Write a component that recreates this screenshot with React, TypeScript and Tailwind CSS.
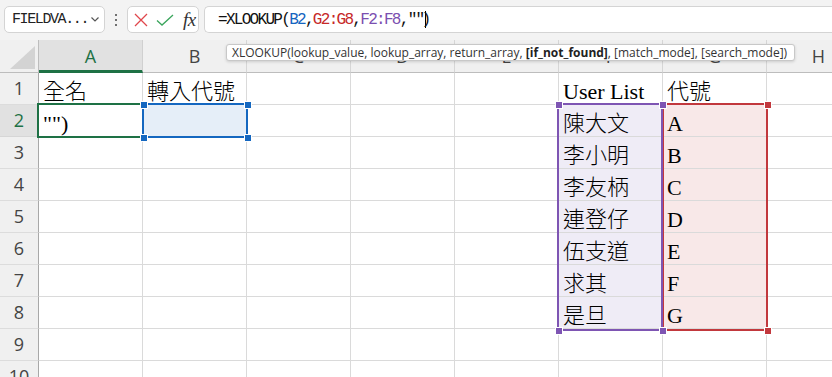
import React from "react";

const cols = ["A", "B", "C", "D", "E", "F", "G", "H"];
const rows = [1, 2, 3, 4, 5, 6, 7, 8, 9, 10];

const data: Record<string, string> = {
  A1: "全名",
  B1: "轉入代號",
  F1: "User List",
  G1: "代號",
  A2: '"")',
  F2: "陳大文",
  G2: "A",
  F3: "李小明",
  G3: "B",
  F4: "李友柄",
  G4: "C",
  F5: "連登仔",
  G5: "D",
  F6: "伍支道",
  G6: "E",
  F7: "求其",
  G7: "F",
  F8: "是旦",
  G8: "G",
};

function cellBg(c: string, r: number): string {
  if (c === "B" && r === 2) return "bg-[#e5eef8]";
  if (c === "F" && r >= 2 && r <= 8) return "bg-[#efecf6]";
  if (c === "G" && r >= 2 && r <= 8) return "bg-[#f8e8e8]";
  return "bg-white";
}

function Handle({ x, y, color }: { x: number; y: number; color: string }) {
  return (
    <div
      className="absolute w-[6px] h-[6px] border border-white box-content"
      style={{ left: x - 3.5, top: y - 3.5, backgroundColor: color }}
    />
  );
}

export default function App() {
  return (
    <div className="relative w-[832px] h-[377px] overflow-hidden bg-white font-['Open_Sans',sans-serif]">
      {/* toolbar */}
      <div className="h-[40px] bg-[#f3f3f3] flex items-start pt-[6px] pl-[4px]">
        <div className="w-[101px] h-[27px] bg-white border border-[#d4d4d4] rounded-[5px] flex items-center pl-[7px] pr-[4px]">
          <span className="font-['Liberation_Mono',monospace] text-[15px] tracking-[-1.4px] text-[#222] leading-none">
            FIELDVA...
          </span>
          <svg className="ml-auto" width="10" height="7" viewBox="0 0 10 7">
            <path d="M1.5 1.5 L5 5 L8.5 1.5" fill="none" stroke="#555" strokeWidth="1.2" />
          </svg>
        </div>
        <div className="w-[22px] h-[27px] flex flex-col items-center justify-center gap-[3px]">
          <span className="w-[2px] h-[2px] bg-[#444] rounded-full" />
          <span className="w-[2px] h-[2px] bg-[#444] rounded-full" />
          <span className="w-[2px] h-[2px] bg-[#444] rounded-full" />
        </div>
        <div className="w-[72px] h-[27px] bg-white border border-[#d4d4d4] rounded-[5px] flex items-center pl-[4px]">
          <svg width="16" height="16" viewBox="0 0 16 16" className="ml-[1px]">
            <path d="M2 2 L14 14 M14 2 L2 14" stroke="#e0474c" strokeWidth="1.3" fill="none" />
          </svg>
          <svg width="18" height="16" viewBox="0 0 18 16" className="ml-[7px]">
            <path d="M1 8.5 L6 13 L17 3" stroke="#3aa55c" strokeWidth="1.3" fill="none" />
          </svg>
          <span className="ml-[9px] font-['Liberation_Serif',serif] italic text-[19px] leading-none text-[#333] tracking-[-0.5px]">
            fx
          </span>
        </div>
        <div className="flex-1 ml-[5px] h-[27px] bg-white border border-r-0 border-[#d4d4d4] rounded-l-[5px] flex items-center pl-[13px]">
          <span className="font-['Liberation_Mono',monospace] text-[16px] tracking-[-1.7px] text-[#111] leading-none whitespace-pre flex items-center">
            <span>=XLOOKUP(</span>
            <span className="text-[#1565c0]">B2</span>
            <span>,</span>
            <span className="text-[#c62828]">G2:G8</span>
            <span>,</span>
            <span className="text-[#7b4fb0]">F2:F8</span>
            <span>,""</span>
            <span className="inline-block w-[1px] h-[17px] bg-black ml-[1px]" />
            <span className="-ml-[4px]">)</span>
          </span>
        </div>
      </div>

      {/* grid */}
      <div className="grid grid-cols-[39px_repeat(8,104px)] grid-rows-[33px_repeat(10,32px)]">
        <div className="bg-[#f0f0f0] border-r border-b border-[#bdbdbd] relative">
          <svg className="absolute left-[10px] top-[6px]" width="26" height="24" viewBox="0 0 26 24">
            <path d="M25 0 L25 23 L0 23 Z" fill="#d3d3d3" />
          </svg>
        </div>
        {cols.map((c) =>
          c === "A" ? (
            <div
              key={c}
              className="bg-[#e1e1e1] border-r border-[#d0d0d0] border-b-[3px] border-b-[#1e7145] flex items-center justify-center text-[18px] text-[#1e7145] pt-[2px]"
            >
              {c}
            </div>
          ) : (
            <div
              key={c}
              className="bg-[#f0f0f0] border-r border-[#d6d6d6] border-b border-b-[#bdbdbd] flex items-center justify-center text-[18px] text-[#444]"
            >
              {c}
            </div>
          )
        )}
        {rows.map((r) => (
          <React.Fragment key={r}>
            <div
              className={
                r === 2
                  ? "bg-[#e1e1e1] border-r border-r-[#a8a8a8] border-b border-b-[#d6d6d6] flex items-center justify-center text-[18px] text-[#1e7145]"
                  : "bg-[#f0f0f0] border-r border-r-[#a8a8a8] border-b border-b-[#dcdcdc] flex items-center justify-center text-[18px] text-[#444]"
              }
            >
              {r}
            </div>
            {cols.map((c) => (
              <div
                key={c + r}
                className={`${cellBg(c, r)} border-r border-b border-[#dadada] flex items-end pl-[4px] overflow-visible whitespace-nowrap font-['Liberation_Serif','Noto_Sans_CJK_TC',serif] font-light text-[22px] leading-[25px] text-black`}
              >
                {data[c + r] ?? ""}
              </div>
            ))}
          </React.Fragment>
        ))}
      </div>

      {/* tooltip */}
      <div className="absolute left-[226px] top-[44px] h-[17px] w-[569px] bg-white border border-[#c8c8c8] rounded-[3px] shadow-[0_1px_3px_rgba(0,0,0,0.15)] flex items-center pl-[5px] text-[12px] leading-none text-[#333] whitespace-nowrap">
        XLOOKUP(lookup_value, lookup_array, return_array,&nbsp;<b className="font-bold text-[#222]">[if_not_found]</b>, [match_mode], [search_mode])
      </div>

      {/* active cell A2 */}
      <div className="absolute left-[37px] top-[103px] w-[107px] h-[35px] border-2 border-[#1e7145]" />
      {/* B2 reference */}
      <div className="absolute left-[142px] top-[103px] w-[106px] h-[35px] border-2 border-[#1467c0]" />
      <Handle x={143} y={104} color="#1467c0" />
      <Handle x={247} y={104} color="#1467c0" />
      <Handle x={143} y={137} color="#1467c0" />
      <Handle x={247} y={137} color="#1467c0" />
      {/* G2:G8 */}
      <div className="absolute left-[662px] top-[103px] w-[106px] h-[228px] border-2 border-[#c2383d]" />
      {/* F2:F8 */}
      <div className="absolute left-[557px] top-[103px] w-[106px] h-[228px] border-2 border-[#7e55b3]" />
      <Handle x={767} y={104} color="#c2383d" />
      <Handle x={767} y={330} color="#c2383d" />
      <Handle x={558} y={104} color="#7e55b3" />
      <Handle x={662} y={104} color="#7e55b3" />
      <Handle x={558} y={330} color="#7e55b3" />
      <Handle x={662} y={330} color="#7e55b3" />
    </div>
  );
}
